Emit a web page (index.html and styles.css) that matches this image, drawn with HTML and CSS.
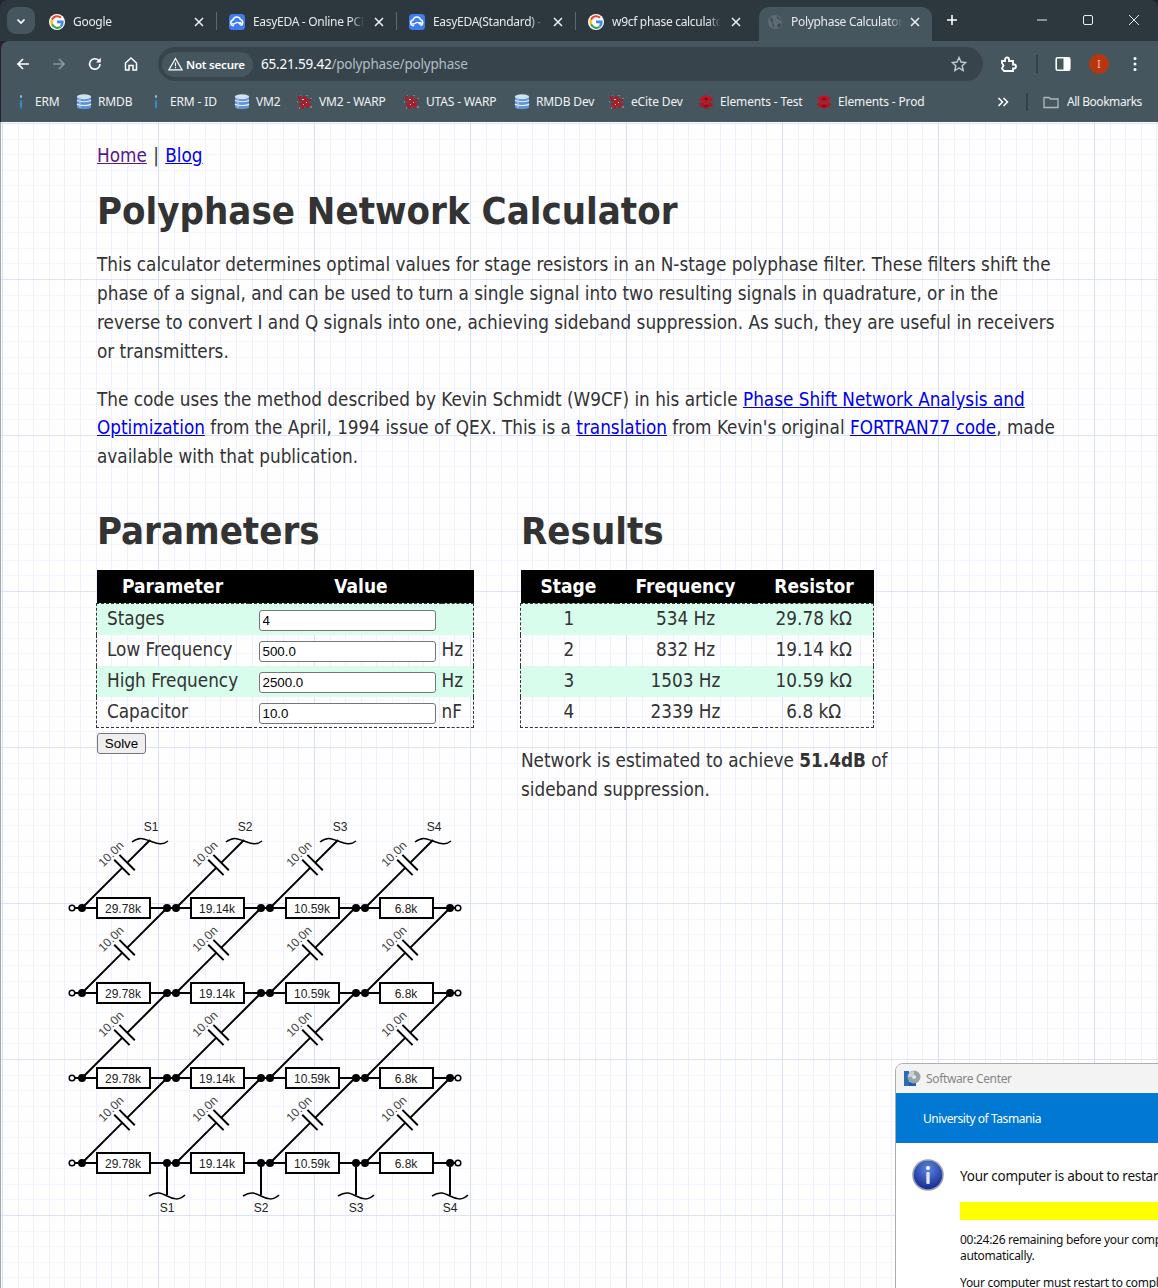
FILE: index.html
```html
<!DOCTYPE html>
<html lang="en">
<head>
<meta charset="utf-8">
<title>Polyphase Calculator</title>
<link rel="stylesheet" href="styles.css">
</head>
<body>
<svg class="sprites" width="0" height="0" aria-hidden="true">
  <defs>
    <symbol id="i-google" viewBox="0 0 18 18">
      <circle cx="9" cy="9" r="9" fill="#fff"/>
      <path d="M9 3.600a5.300 5.300 0 0 1 3.600 1.400l1.700-1.700A7.700 7.700 0 0 0 2.400 5.500l2.100 1.700A5 5 0 0 1 9 3.600z" fill="#ea4335"/>
      <path d="M2.400 5.500a7.700 7.700 0 0 0 0 7l2.100-1.700a5 5 0 0 1 0-3.600z" fill="#fbbc05"/>
      <path d="M2.400 12.500A7.700 7.700 0 0 0 14.200 15l-2-1.600a5 5 0 0 1-7.700-2.600z" fill="#34a853"/>
      <path d="M16.500 9c0-.6-.1-1.100-.2-1.600H9v3h4.200a3.600 3.600 0 0 1-1 2.900l2 1.700A7.600 7.600 0 0 0 16.500 9z" fill="#4285f4"/>
    </symbol>
    <symbol id="i-eda" viewBox="0 0 18 18">
      <rect width="18" height="18" rx="4" fill="#3f7cf0"/>
      <path d="M5 13.200a3.300 3.300 0 0 1-.5-6.500 4.400 4.400 0 0 1 8.400-.4 3.400 3.400 0 0 1 .6 6.400" fill="none" stroke="#fff" stroke-width="1.700" stroke-linecap="round"/>
      <path d="M3.500 10.500C6 13.500 8 7.500 11 10l3 0" fill="none" stroke="#fff" stroke-width="1.500"/>
      <circle cx="12.500" cy="10.600" r="1.600" fill="#fff"/>
    </symbol>
    <symbol id="i-drop" viewBox="0 0 14 16">
      <path d="M7 5c1.600 3 1.600 7 0 10.500C5.400 12 5.400 8 7 5z" fill="#2e8fd0"/>
      <rect x="6" y="1" width="2" height="3" rx="1" fill="#7fc3ea"/>
    </symbol>
    <symbol id="i-db" viewBox="0 0 16 16">
      <rect x="1" y="2" width="14" height="12" fill="#5f95d6"/>
      <ellipse cx="8" cy="2.800" rx="7" ry="2.500" fill="#cfe3f6"/>
      <path d="M1 6.200c2 2 12 2 14 0M1 10c2 2 12 2 14 0" fill="none" stroke="#e6f0fa" stroke-width="1.100"/>
      <path d="M1 13.500c2 2.300 12 2.300 14 0" fill="#5f95d6"/>
      <rect x="3" y="3" width="2" height="11" fill="#a9cbee" opacity=".6"/>
    </symbol>
    <symbol id="i-lion" viewBox="0 0 16 16">
      <path d="M1 2h3v2h2V2h3v3h5v2h-3v2h3v2h-2v3h-3v-2H7v3H4v-3H2V9h3V7H2V5H1z" fill="#a51f2a"/>
      <path d="M3 1h1v1H3zM9 1h2v1H9zM13 4h2v1h-2zM0 7h1v2H0zM13 12h2v2h-2zM2 13h1v2H2z" fill="#8d7a7e"/>
      <path d="M5 5h2v1H5zM9 8h1v1H9zM6 10h1v1H6z" fill="#e0c8c8"/>
    </symbol>
    <symbol id="i-elem" viewBox="0 0 16 16">
      <path d="M8 1l6.500 3v2.500L8 9.700 1.500 6.500V4z" fill="#c01523"/>
      <path d="M1.500 9.500l2.300-1.100L8 10.500l4.200-2.100 2.300 1.100V12L8 15l-6.500-3z" fill="#b01420"/>
      <path d="M5 5l3-1.500L11 5 8 6.500z" fill="#7d0f18"/>
      <path d="M5.500 12L8 10.800 10.500 12 8 13.200z" fill="#7d0f18"/>
    </symbol>
    <symbol id="i-x" viewBox="0 0 10 10">
      <path d="M1 1l8 8M9 1l-8 8" fill="none" stroke="currentColor" stroke-width="1.500"/>
    </symbol>
    <g id="cap">
      <path d="M0 0L39.900 -39.900M45.100 -45.100L85 -85" class="wire"/>
      <path d="M32.200 -48.300L47.600 -32.900M37.400 -53.100L52.800 -37.700" class="wire"/>
      <text x="28.800" y="-50" class="clabel" transform="rotate(-45 28.800 -54.200)">10.0n</text>
    </g>
    <g id="captop">
      <path d="M0 0L39.900 -39.900M45.100 -45.100L68 -68" class="wire"/>
      <path d="M32.200 -48.300L47.600 -32.900M37.400 -53.100L52.800 -37.700" class="wire"/>
      <text x="28.800" y="-50" class="clabel" transform="rotate(-45 28.800 -54.200)">10.0n</text>
      <path d="M50 -66c8-6 12-3 18-1s12 5 18 0" class="wave"/>
    </g>
    <g id="tail">
      <path d="M0 0V32" class="wire"/>
      <path d="M-18 33c8-5 12-3 18 0s12 5 18-1" class="wave"/>
    </g>
    <g id="row">
      <path d="M72 908H458" class="wire"/>
      <rect x="97" y="898" width="53" height="20" class="res"/>
      <text x="123" y="913" class="rval">29.78k</text>
      <rect x="191" y="898" width="53" height="20" class="res"/>
      <text x="217" y="913" class="rval">19.14k</text>
      <rect x="286" y="898" width="53" height="20" class="res"/>
      <text x="312" y="913" class="rval">10.59k</text>
      <rect x="380" y="898" width="53" height="20" class="res"/>
      <text x="406" y="913" class="rval">6.8k</text>
      <circle cx="82" cy="908" r="4"/><circle cx="167" cy="908" r="4"/>
      <circle cx="176" cy="908" r="4"/><circle cx="261" cy="908" r="4"/>
      <circle cx="270" cy="908" r="4"/><circle cx="356" cy="908" r="4"/>
      <circle cx="365" cy="908" r="4"/><circle cx="450" cy="908" r="4"/>
      <circle cx="72" cy="908" r="2.800" class="open"/>
      <circle cx="458" cy="908" r="2.800" class="open"/>
    </g>
  </defs>
</svg>

<header class="chrome">
  <div class="tabstrip">
    <button class="tablist" type="button" aria-label="Search tabs">
      <svg width="12" height="12" viewBox="0 0 12 12"><path d="M2.500 4.500L6 8l3.500-3.500" fill="none" stroke="#fff" stroke-width="1.700"/></svg>
    </button>
    <div class="tabs">
      <div class="tab sep"><svg class="fav"><use href="#i-google"/></svg><span class="tab-title">Google</span><svg class="tab-x"><use href="#i-x"/></svg></div>
      <div class="tab sep"><svg class="fav"><use href="#i-eda"/></svg><span class="tab-title">EasyEDA - Online PCB</span><svg class="tab-x"><use href="#i-x"/></svg></div>
      <div class="tab sep"><svg class="fav"><use href="#i-eda"/></svg><span class="tab-title">EasyEDA(Standard) - A</span><svg class="tab-x"><use href="#i-x"/></svg></div>
      <div class="tab"><svg class="fav"><use href="#i-google"/></svg><span class="tab-title">w9cf phase calculator</span><svg class="tab-x"><use href="#i-x"/></svg></div>
      <div class="tab active">
        <svg class="fav" viewBox="0 0 16 16"><circle cx="8" cy="8" r="7" fill="#5c6b73"/><path d="M3 4c2 0 3 1 3 2.500S4.500 9 6 10s1 3.500 1 4.500M10 2c-1 2 1 2.500 2 3.500s2 1 2.500 1M11 10c1-1 2.500-.5 3 0-.5 2-2 3.500-3.500 3.500z" fill="#3a474e"/></svg>
        <span class="tab-title">Polyphase Calculator</span><svg class="tab-x"><use href="#i-x"/></svg>
      </div>
    </div>
    <svg class="newtab" width="12" height="12" viewBox="0 0 12 12"><path d="M6 1v10M1 6h10" stroke="#fff" stroke-width="1.600"/></svg>
    <div class="winctl">
      <svg width="12" height="12" viewBox="0 0 12 12"><path d="M1 6h10" stroke="#e8eaed" stroke-width="1"/></svg>
      <svg width="12" height="12" viewBox="0 0 12 12"><rect x="1.500" y="1.500" width="9" height="9" rx="1.500" fill="none" stroke="#e8eaed"/></svg>
      <svg width="12" height="12" viewBox="0 0 12 12"><path d="M1 1l10 10M11 1L1 11" stroke="#e8eaed" stroke-width="1"/></svg>
    </div>
  </div>

  <div class="toolbar">
    <div class="navs">
      <svg width="16" height="16" viewBox="0 0 16 16"><path d="M14 8H3M8 3L3 8l5 5" fill="none" stroke="#fff" stroke-width="1.700"/></svg>
      <svg width="16" height="16" viewBox="0 0 16 16"><path d="M2 8h11M8 3l5 5-5 5" fill="none" stroke="#8b979e" stroke-width="1.700"/></svg>
      <svg width="16" height="16" viewBox="0 0 16 16"><path d="M13 8a5.200 5.200 0 1 1-1.500-3.700L13 5.800" fill="none" stroke="#fff" stroke-width="1.600"/><path d="M13.700 1.800v4.700H9z" fill="#fff"/></svg>
      <svg width="16" height="16" viewBox="0 0 16 16"><path d="M2.500 7L8 2l5.500 5v7H10V9.500H6V14H2.500z" fill="none" stroke="#fff" stroke-width="1.500"/></svg>
    </div>
    <div class="omnibox">
      <div class="secure">
        <svg width="15" height="14" viewBox="0 0 15 14"><path d="M7.500 1.500L14 12.800H1z" fill="none" stroke="#fff" stroke-width="1.200"/><path d="M7.500 5.500v3.700M7.500 10v1.200" stroke="#fff" stroke-width="1.100"/></svg>
        <span>Not secure</span>
      </div>
      <div class="url"><span class="host">65.21.59.42</span>/polyphase/polyphase</div>
      <svg class="star" width="16" height="16" viewBox="0 0 16 16"><path d="M8 1.500l2 4.500 4.800.5-3.600 3.200 1 4.800L8 12l-4.200 2.500 1-4.800L1.200 6.500 6 6z" fill="none" stroke="#c3cbd0" stroke-width="1.400"/></svg>
    </div>
    <div class="tools">
      <svg class="t-ext" width="18" height="18" viewBox="0 0 18 18"><path d="M2 6h3V4.500a2 2 0 0 1 4 0V6h4v3.500h1a2 2 0 0 1 0 4h-1V16H4l-2-2.500 1.500-3L2 8z" fill="none" stroke="#fff" stroke-width="1.800"/></svg>
      <span class="t-sep"></span>
      <svg class="t-side" width="16" height="16" viewBox="0 0 16 16"><rect x="1.200" y="1.700" width="13.600" height="12.600" rx="1.500" fill="none" stroke="#fff" stroke-width="1.600"/><rect x="8.500" y="1.700" width="6.300" height="12.600" fill="#fff"/></svg>
      <span class="avatar">I</span>
      <svg class="t-menu" width="4" height="16" viewBox="0 0 4 16"><circle cx="2" cy="2.500" r="1.500" fill="#fff"/><circle cx="2" cy="8" r="1.500" fill="#fff"/><circle cx="2" cy="13.500" r="1.500" fill="#fff"/></svg>
    </div>
  </div>

  <nav class="bookmarks">
    <span class="bm"><svg class="bm-ic"><use href="#i-drop"/></svg>ERM</span>
    <span class="bm"><svg class="bm-ic"><use href="#i-db"/></svg>RMDB</span>
    <span class="bm"><svg class="bm-ic"><use href="#i-drop"/></svg>ERM - ID</span>
    <span class="bm"><svg class="bm-ic"><use href="#i-db"/></svg>VM2</span>
    <span class="bm"><svg class="bm-ic"><use href="#i-lion"/></svg>VM2 - WARP</span>
    <span class="bm"><svg class="bm-ic"><use href="#i-lion"/></svg>UTAS - WARP</span>
    <span class="bm"><svg class="bm-ic"><use href="#i-db"/></svg>RMDB Dev</span>
    <span class="bm"><svg class="bm-ic"><use href="#i-lion"/></svg>eCite Dev</span>
    <span class="bm"><svg class="bm-ic"><use href="#i-elem"/></svg>Elements - Test</span>
    <span class="bm"><svg class="bm-ic"><use href="#i-elem"/></svg>Elements - Prod</span>
    <span class="bm-more"><svg width="12" height="10" viewBox="0 0 12 10"><path d="M1.500 1l4 4-4 4M6.500 1l4 4-4 4" fill="none" stroke="#fff" stroke-width="1.500"/></svg></span>
    <span class="bm-sep"></span>
    <span class="bm bm-all"><svg class="bm-ic" viewBox="0 0 16 16"><path d="M1 3.500h5l1.500 1.500H15v8.500H1z" fill="none" stroke="#aeb8bd" stroke-width="1.300"/></svg>All Bookmarks</span>
  </nav>
</header>

<main class="page">
  <p class="topnav"><a class="visited" href="#">Home</a> | <a href="#">Blog</a></p>
  <h1>Polyphase Network Calculator</h1>
  <p class="copy">This calculator determines optimal values for stage resistors in an N-stage polyphase filter. These filters shift the phase of a signal, and can be used to turn a single signal into two resulting signals in quadrature, or in the reverse to convert I and Q signals into one, achieving sideband suppression. As such, they are useful in receivers or transmitters.</p>
  <p class="copy">The code uses the method described by Kevin Schmidt (W9CF) in his article <a href="#">Phase Shift Network Analysis and Optimization</a> from the April, 1994 issue of QEX. This is a <a href="#">translation</a> from Kevin's original <a href="#">FORTRAN77 code</a>, made available with that publication.</p>

  <div class="columns">
    <section class="col-params">
      <h2>Parameters</h2>
      <table class="grid params">
        <colgroup><col class="pc1"><col class="pc2"><col class="pc3"></colgroup>
        <thead><tr><th>Parameter</th><th colspan="2">Value</th></tr></thead>
        <tbody>
          <tr><td class="label">Stages</td><td class="field"><input type="text" value="4"></td><td></td></tr>
          <tr><td class="label">Low Frequency</td><td class="field"><input type="text" value="500.0"></td><td>Hz</td></tr>
          <tr><td class="label">High Frequency</td><td class="field"><input type="text" value="2500.0"></td><td>Hz</td></tr>
          <tr><td class="label">Capacitor</td><td class="field"><input type="text" value="10.0"></td><td>nF</td></tr>
        </tbody>
      </table>
      <button class="solve" type="button">Solve</button>

      <svg class="circuit" width="420" height="410" viewBox="60 815 420 410" role="img" aria-label="Polyphase network schematic">
        <text x="151" y="831" class="slabel">S1</text>
        <text x="245" y="831" class="slabel">S2</text>
        <text x="340" y="831" class="slabel">S3</text>
        <text x="434" y="831" class="slabel">S4</text>
        <use href="#captop" x="82" y="908"/>
        <use href="#captop" x="176" y="908"/>
        <use href="#captop" x="270" y="908"/>
        <use href="#captop" x="365" y="908"/>
        <use href="#cap" x="82" y="993"/><use href="#cap" x="176" y="993"/><use href="#cap" x="270" y="993"/><use href="#cap" x="365" y="993"/>
        <use href="#cap" x="82" y="1078"/><use href="#cap" x="176" y="1078"/><use href="#cap" x="270" y="1078"/><use href="#cap" x="365" y="1078"/>
        <use href="#cap" x="82" y="1163"/><use href="#cap" x="176" y="1163"/><use href="#cap" x="270" y="1163"/><use href="#cap" x="365" y="1163"/>
        <use href="#tail" x="167" y="1163"/><use href="#tail" x="261" y="1163"/><use href="#tail" x="356" y="1163"/><use href="#tail" x="450" y="1163"/>
        <use href="#row"/>
        <use href="#row" y="85"/>
        <use href="#row" y="170"/>
        <use href="#row" y="255"/>
        <text x="167" y="1212" class="slabel">S1</text>
        <text x="261" y="1212" class="slabel">S2</text>
        <text x="356" y="1212" class="slabel">S3</text>
        <text x="450" y="1212" class="slabel">S4</text>
      </svg>
    </section>
    <section class="col-results">
      <h2>Results</h2>
      <table class="grid results">
        <colgroup><col class="rc1"><col class="rc2"><col class="rc3"></colgroup>
        <thead><tr><th>Stage</th><th>Frequency</th><th>Resistor</th></tr></thead>
        <tbody>
          <tr><td>1</td><td>534 Hz</td><td>29.78 kΩ</td></tr>
          <tr><td>2</td><td>832 Hz</td><td>19.14 kΩ</td></tr>
          <tr><td>3</td><td>1503 Hz</td><td>10.59 kΩ</td></tr>
          <tr><td>4</td><td>2339 Hz</td><td>6.8 kΩ</td></tr>
        </tbody>
      </table>
      <p class="summary">Network is estimated to achieve <strong>51.4dB</strong> of sideband suppression.</p>
    </section>
  </div>
</main>

<aside class="toast">
  <div class="toast-title">
    <svg width="17" height="17" viewBox="0 0 17 17"><rect x="0" y="1" width="5" height="15" fill="#2a6db5"/><rect x="5" y="12" width="7" height="4" fill="#1b5fb0"/><circle cx="10" cy="7" r="6.500" fill="#9aa3aa"/><circle cx="10" cy="7" r="2" fill="#e4e8ea"/><path d="M4 7a6 6 0 0 1 6-6v4a2 2 0 0 0-2 2z" fill="#c9d2d8"/></svg>
    <span>Software Center</span>
  </div>
  <div class="toast-band">University of Tasmania</div>
  <div class="toast-body">
    <svg class="info" width="32" height="32" viewBox="0 0 32 32">
      <defs><radialGradient id="infog" cx="50%" cy="30%" r="70%"><stop offset="0" stop-color="#5b86e0"/><stop offset="1" stop-color="#12288f"/></radialGradient></defs>
      <circle cx="16" cy="16" r="15" fill="url(#infog)" stroke="#9aa0a8" stroke-width="1.600"/>
      <circle cx="16" cy="9" r="2" fill="#fff"/>
      <rect x="14.300" y="13" width="3.400" height="12" rx="1" fill="#e2e6ea"/>
    </svg>
    <div class="toast-text">
      <p class="t-head">Your computer is about to restart</p>
      <div class="t-bar"></div>
      <p class="t-line">00:24:26 remaining before your computer will restart<br>automatically.</p>
      <p class="t-line t-last">Your computer must restart to complete</p>
    </div>
  </div>
</aside>
</body>
</html>
```

FILE: styles.css
```css
* { box-sizing: border-box; }
html, body { margin: 0; padding: 0; height: 1288px; overflow: hidden; }
body {
  position: relative;
  width: 1158px;
  background: #2a2030;
  font-family: "Noto Sans", sans-serif;
}
.sprites { position: absolute; }

/* browser chrome */
.chrome { height: 122px; color: #fff; font-size: 12px; }
.tabstrip {
  display: flex;
  height: 41px;
  padding: 3px 0 0 0;
  background: #2d383e;
  border-radius: 8px 8px 0 0;
  position: relative;
}
.tablist {
  width: 28px; height: 27px; margin: 4px 0 0 7px; padding: 0;
  display: flex; align-items: center; justify-content: center;
  background: #46565f; border: 0; border-radius: 9px;
}
.tabs {
  display: grid;
  grid-template-columns: 180px 180px 179px 178px 173px;
  margin-left: 7px;
  margin-top: 4px;
  height: 34px;
}
.tab {
  display: flex; align-items: center;
  padding: 0 8px 4px 7px;
  position: relative;
  color: #e8eaed;
}
.tab.sep::after {
  content: ""; position: absolute; right: 5px; top: 5px; width: 1px; height: 18px; background: #5a686f;
}
.tab.active { background: #46565f; border-radius: 10px 10px 0 0; padding-left: 8px; padding-right: 12px; }
.fav { width: 16px; height: 16px; flex: none; margin-right: 8px; }
.tab-title {
  flex: 1; min-width: 0; overflow: hidden; white-space: nowrap;
  letter-spacing: -.3px; font-size: 12px; line-height: 16px;
  -webkit-mask-image: linear-gradient(90deg, #000 88%, transparent 100%);
  mask-image: linear-gradient(90deg, #000 88%, transparent 100%);
}
.tab-x { width: 10px; height: 10px; flex: none; margin: 0 10px 0 10px; color: #eef1f3; }
.tab.active .tab-x { margin-right: 0; margin-left: 8px; }
.newtab { margin: 11px 0 0 14px; }
.winctl {
  position: absolute; right: 18px; top: 14px;
  display: flex; gap: 34px;
}
.toolbar {
  height: 40px;
  padding-top: 6px;
  display: flex; align-items: center;
  background: #46565f;
  margin-left: 1px;
  border-radius: 8px 0 0 0;
}
.navs { display: flex; gap: 20px; margin-left: 14px; width: 143px; }
.omnibox {
  width: 825px; height: 34px;
  display: flex; align-items: center;
  background: #37444c; border-radius: 17px;
  padding-left: 4px; padding-right: 16px;
}
.secure {
  height: 25px; width: 91px;
  display: flex; align-items: center; gap: 3px;
  padding-left: 6px;
  background: #46565f; border-radius: 13px;
  font-weight: 600; font-size: 11.500px; letter-spacing: -.2px; white-space: nowrap;
}
.url { margin-left: 8px; font-size: 13.500px; color: #b3bdc3; letter-spacing: -.2px; flex: 1; }
.host { color: #fff; }
.tools { display: flex; align-items: center; margin-left: 17px; }
.t-sep { width: 2px; height: 18px; background: #33414a; margin: 0 17px 0 18px; }
.avatar {
  width: 20px; height: 20px; border-radius: 50%; background: #b8360f; margin: 0 24px 0 18px;
  display: flex; align-items: center; justify-content: center; font-size: 10px; color: #f4c9b9;
}
.bookmarks {
  height: 41px;
  display: grid;
  grid-template-columns: 63px 72px 86px 63px 107px 110px 95px 89px 118px 181px 29px 17px auto;
  align-items: center;
  padding-left: 12px;
  background: #46565f;
  margin-left: 1px;
}
.bm { display: flex; align-items: center; font-size: 12px; letter-spacing: -.15px; white-space: nowrap; color: #f1f3f4; }
.bm-ic { width: 16px; height: 16px; flex: none; margin-right: 6px; }
.bm-more { display: flex; }
.bm-sep { width: 2px; height: 18px; background: #33414a; }
.bm-all { letter-spacing: -.45px; }
.bm-all .bm-ic { margin-right: 8px; }

/* page */
.page {
  height: 1166px;
  padding: 20px 96px 0;
  border-left: 1px solid #a3a6a8;
  color: #333;
  font-family: "DejaVu Sans Condensed", "DejaVu Sans", sans-serif;
  font-stretch: condensed;
  font-size: 18.750px;
  line-height: 28.800px;
  overflow: hidden;
  background-color: #fefefe;
  background-image:
    repeating-linear-gradient(90deg, transparent 0 1px, #d8dffb 1px 2px, transparent 2px 156px),
    repeating-linear-gradient(180deg, transparent 0 1px, #dde3fb 1px 2px, transparent 2px 156px),
    repeating-linear-gradient(90deg, transparent 0 1px, #eef0ff 1px 2px, transparent 2px 15.600px),
    repeating-linear-gradient(180deg, transparent 0 1px, #f4f5ff 1px 2px, transparent 2px 15.600px);
}
a { color: #00e; }
a.visited { color: #551a8b; }
.topnav { margin: 0; word-spacing: 1px; }
h1, h2 { font-weight: 700; margin: 0; color: #333; }
h1 { font-size: 38px; line-height: 46px; margin-top: 17px; }
.copy { margin: 19.200px 0 0; }
h1 + .copy { margin-top: 17.400px; }
.columns { display: flex; gap: 47px; margin-top: 36.400px; }
.col-params { width: 377px; flex: none; }
.col-results { width: 385px; flex: none; }
h2 { font-size: 38px; line-height: 46px; margin-bottom: 16px; }
.grid { border-collapse: collapse; table-layout: fixed; margin-left: -1px; }
.grid th { background: #000; color: #fff; height: 33px; padding: 0; font-weight: 700; text-align: center; font-size: 19px; }
.grid tbody { border: 1px dashed #333; }
.grid td { height: 31px; padding: 0; }
.grid tbody tr:first-child td { height: 32px; }
.grid tbody tr:last-child td { height: 30px; }
.grid tbody tr:nth-child(odd) td { background: #d9fdec; }
.params { width: 377px; }
.pc1 { width: 152px; } .pc2 { width: 193px; } .pc3 { width: 32px; }
.grid td.label { padding-left: 10px; white-space: nowrap; }
.grid td.field { padding-left: 10px; }
.field input {
  display: block; width: 177px; height: 21px; padding: 1px 3px;
  font: 13.333px "Liberation Sans", Arial, sans-serif;
  color: #000; background: #fff;
  border: 1px solid #767676; border-radius: 3px;
  position: relative; top: 1px;
}
.solve {
  display: block; width: 49px; height: 21px; margin-top: 5px; padding: 0;
  font: 13.333px "Liberation Sans", Arial, sans-serif; color: #000;
  background: #efefef; border: 1px solid #767676; border-radius: 3px;
}
.results { width: 353px; }
.rc1 { width: 96px; } .rc2 { width: 138px; } .rc3 { width: 119px; }
.results td { text-align: center; }
.summary { margin: 19.500px 0 0; }

.circuit { display: block; margin: 61px 0 0 -37px; }
.wire { fill: none; stroke: #000; stroke-width: 2; }
.wave { fill: none; stroke: #000; stroke-width: 1.500; }
.res { fill: #fff; stroke: #000; stroke-width: 2; }
.open { fill: #fff; stroke: #000; stroke-width: 1.500; }
.rval, .slabel, .clabel { font: 12px "Liberation Sans", Arial, sans-serif; text-anchor: middle; fill: #222; }
.clabel { fill: #444; }

/* notification */
.toast {
  position: absolute; left: 895px; top: 1063px; width: 300px; height: 260px;
  background: #fff; border: 1px solid #aeaeae; border-radius: 8px 0 0 0;
  overflow: hidden; font-size: 12px;
}
.toast-title {
  height: 29px; display: flex; align-items: center; gap: 5px; padding-left: 8px;
  background: #f3f3f3; color: #868686; letter-spacing: -.35px;
}
.toast-band {
  height: 50px; display: flex; align-items: center; padding-left: 27px;
  background: #0078d4; color: #fff; letter-spacing: -.43px;
}
.toast-body { display: flex; padding: 16px 0 0 16px; }
.info { flex: none; }
.toast-text { margin-left: 16px; white-space: nowrap; color: #111; }
.t-head { margin: 8px 0 0; font-size: 13.500px; line-height: 18px; letter-spacing: -.25px; }
.t-bar { width: 290px; height: 18px; background: #ff0; margin-top: 17px; }
.t-line { margin: 12px 0 0; line-height: 16px; letter-spacing: -.3px; }
.t-last { margin-top: 11px; }
```
